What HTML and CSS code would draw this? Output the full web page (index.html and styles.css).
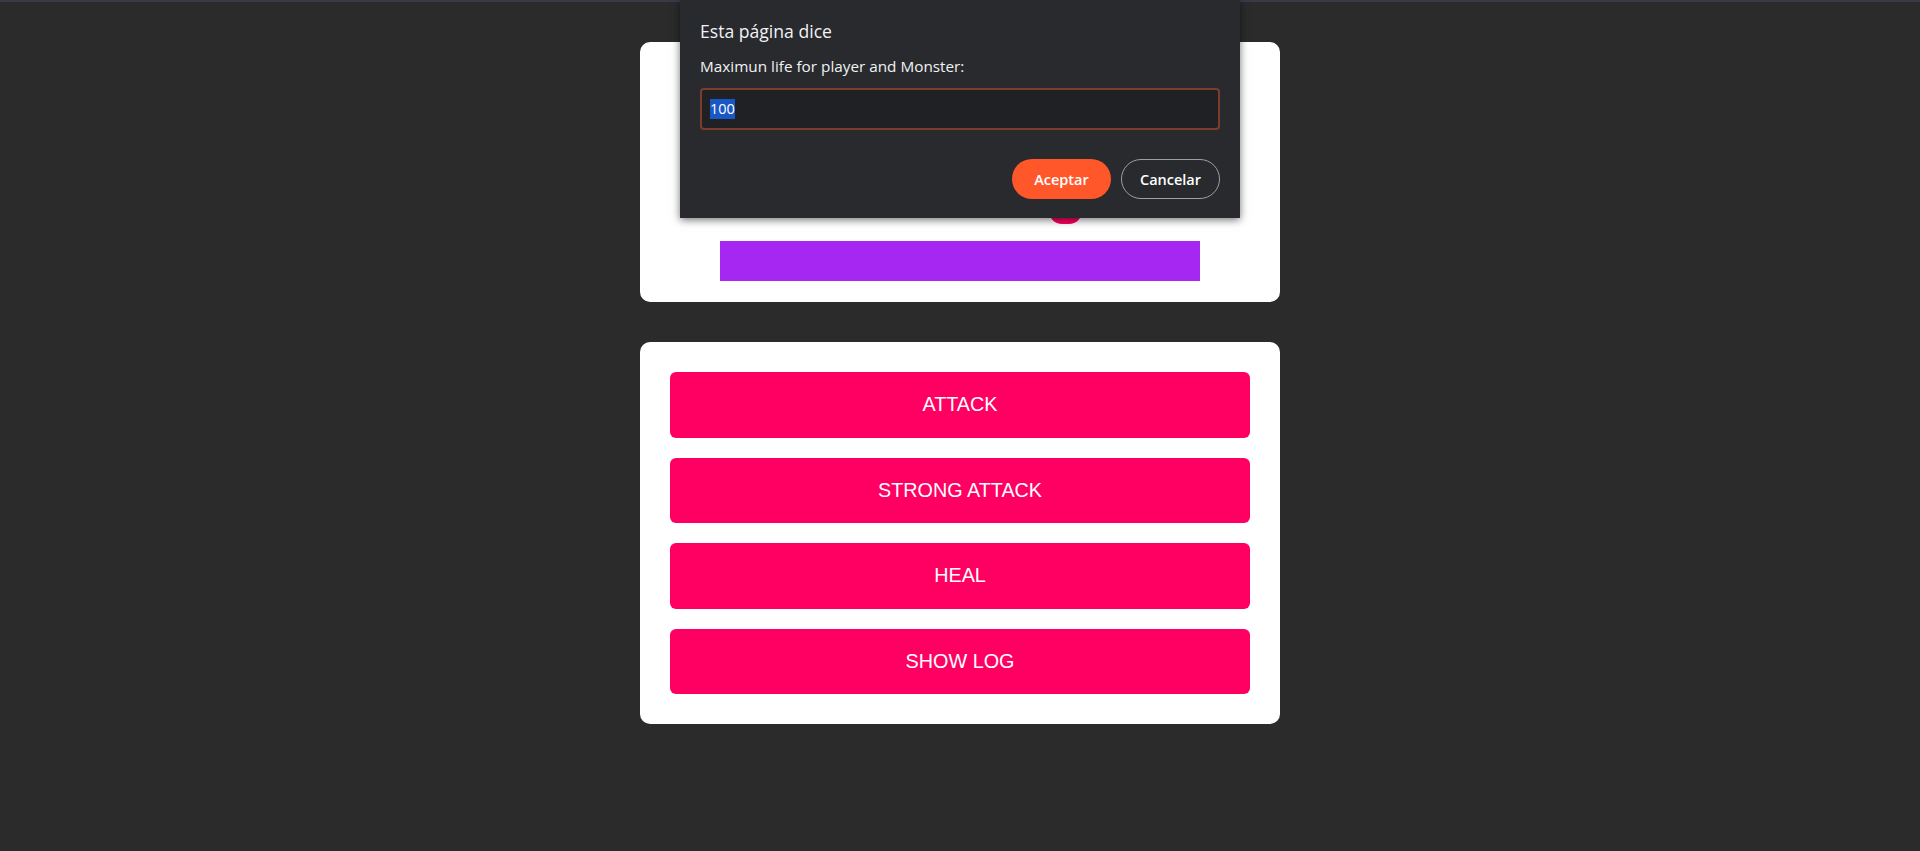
FILE: index.html
```html
<!DOCTYPE html>
<html lang="es">
<head>
<meta charset="utf-8">
<title>Monster Killer</title>
<link rel="stylesheet" href="styles.css">
</head>
<body>
<div class="topline"></div>
<main class="page">
  <section class="card health">
    <div class="health-row"></div>
    <div class="bar monster-bar"></div>
    <div class="health-row player-row"><span class="bonus"></span></div>
    <div class="bar player-bar"></div>
  </section>
  <section class="card controls">
    <button class="action">ATTACK</button>
    <button class="action">STRONG ATTACK</button>
    <button class="action">HEAL</button>
    <button class="action">SHOW LOG</button>
  </section>
</main>
<div class="dialog">
  <div class="dialog-title">Esta página dice</div>
  <div class="dialog-label">Maximun life for player and Monster:</div>
  <div class="dialog-input"><span class="selected">100</span></div>
  <div class="dialog-actions">
    <button class="btn btn-ok">Aceptar</button>
    <button class="btn btn-cancel">Cancelar</button>
  </div>
</div>
</body>
</html>
```
FILE: styles.css
```css
* { box-sizing: border-box; }
html, body { margin: 0; padding: 0; }
body {
  background: #2b2b2b;
  font-family: "Liberation Sans", Arial, sans-serif;
  height: 851px;
  overflow: hidden;
  position: relative;
}
.topline {
  height: 2px;
  background: #383949;
}
.page {
  display: flex;
  flex-direction: column;
  align-items: center;
}
.card {
  width: 640px;
  background: #ffffff;
  border-radius: 10px;
}
.health {
  margin-top: 40px;
  padding: 20px 80px 21px;
  display: flex;
  flex-direction: column;
}
.health-row {
  height: 34px;
  display: flex;
  justify-content: flex-end;
  align-items: center;
  padding-right: 118px;
}
.player-row { margin-top: 48px; }
.bonus {
  display: block;
  width: 33px;
  height: 34px;
  border-radius: 13px;
  background: #ff0062;
}
.bar {
  height: 40px;
  background: #a626f2;
}
.monster-bar { margin-top: 6px; }
.player-bar { margin-top: 17px; }
.controls {
  margin-top: 40px;
  padding: 30px;
  display: flex;
  flex-direction: column;
  gap: 20px;
}
.action {
  height: 65.5px;
  border: none;
  border-radius: 6px;
  background: #ff0062;
  color: #ffffff;
  font-family: "Liberation Sans", Arial, sans-serif;
  font-size: 19.8px;
  cursor: pointer;
}
.dialog {
  position: absolute;
  top: 0;
  left: 680px;
  width: 560px;
  height: 218px;
  background: #292a2d;
  box-shadow: 0 2px 8px rgba(0, 0, 0, 0.55);
  padding: 19px 20px 19px;
  font-family: "Open Sans", "Noto Sans", sans-serif;
  color: #f1f3f4;
  display: flex;
  flex-direction: column;
}
.dialog-title {
  font-size: 17.6px;
  line-height: 24px;
}
.dialog-label {
  margin-top: 13px;
  font-size: 15.3px;
  line-height: 20px;
}
.dialog-input {
  margin-top: 12px;
  height: 42px;
  border: 2px solid #7f3b2c;
  border-radius: 4px;
  background: #202124;
  padding: 0 8px;
  display: flex;
  align-items: center;
  font-size: 14.5px;
}
.selected {
  background: #1a57c6;
  color: #ffffff;
  line-height: 20px;
}
.dialog-actions {
  margin-top: 29px;
  display: flex;
  justify-content: flex-end;
  gap: 10px;
}
.btn {
  width: 99px;
  height: 40px;
  border-radius: 20px;
  font-family: "Open Sans", "Noto Sans", sans-serif;
  font-size: 14.5px;
  font-weight: 600;
  color: #ffffff;
  cursor: pointer;
}
.btn-ok {
  background: #ff572a;
  border: none;
}
.btn-cancel {
  background: transparent;
  border: 1px solid #9aa0a6;
}
```
